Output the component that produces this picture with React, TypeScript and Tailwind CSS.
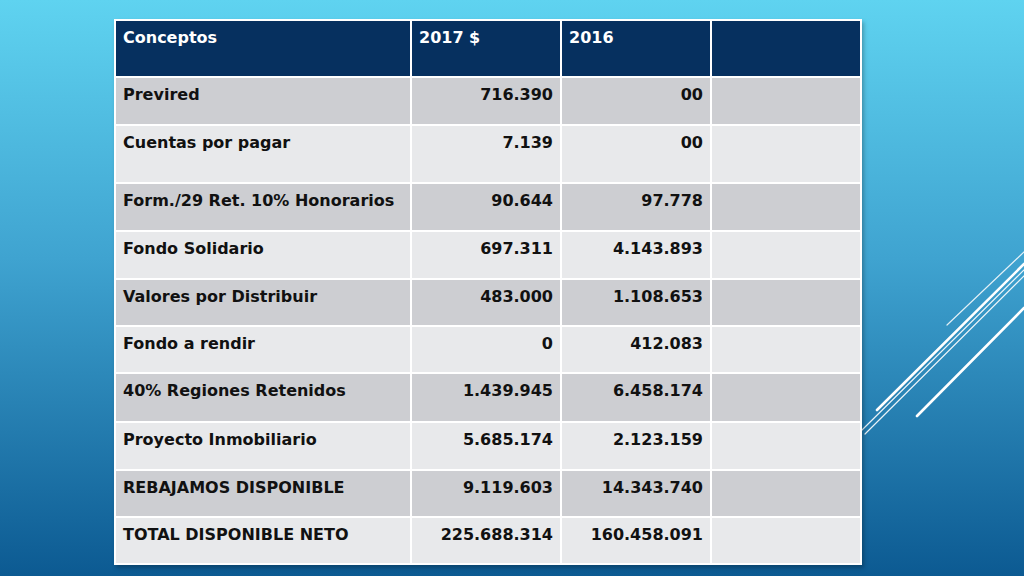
import React from "react";

type Row = { label: string; y2017: string; y2016: string; h: string };

const rows: Row[] = [
  { label: "Previred", y2017: "716.390", y2016: "00", h: "h-[48px]" },
  { label: "Cuentas por pagar", y2017: "7.139", y2016: "00", h: "h-[58px]" },
  { label: "Form./29 Ret. 10% Honorarios", y2017: "90.644", y2016: "97.778", h: "h-[48px]" },
  { label: "Fondo Solidario", y2017: "697.311", y2016: "4.143.893", h: "h-[48px]" },
  { label: "Valores por Distribuir", y2017: "483.000", y2016: "1.108.653", h: "h-[47px]" },
  { label: "Fondo a rendir", y2017: "0", y2016: "412.083", h: "h-[47px]" },
  { label: "40% Regiones Retenidos", y2017: "1.439.945", y2016: "6.458.174", h: "h-[49px]" },
  { label: "Proyecto Inmobiliario", y2017: "5.685.174", y2016: "2.123.159", h: "h-[48px]" },
  { label: "REBAJAMOS DISPONIBLE", y2017: "9.119.603", y2016: "14.343.740", h: "h-[47px]" },
  { label: "TOTAL DISPONIBLE NETO", y2017: "225.688.314", y2016: "160.458.091", h: "h-[47px]" },
];

function Lines() {
  return (
    <svg className="pointer-events-none absolute inset-0" width="1024" height="576" viewBox="0 0 1024 576">
      <g stroke="#ffffff" strokeLinecap="round">
        <line x1="1024" y1="252" x2="947" y2="325" strokeWidth="1.2" opacity="0.85" />
        <line x1="1024" y1="264" x2="877" y2="410" strokeWidth="2.6" />
        <line x1="1024" y1="270" x2="862" y2="430" strokeWidth="1.2" opacity="0.9" />
        <line x1="1024" y1="276" x2="865" y2="434" strokeWidth="1.2" opacity="0.9" />
        <line x1="1024" y1="308" x2="917" y2="416" strokeWidth="2.6" />
      </g>
    </svg>
  );
}

export default function App() {
  return (
    <div className="relative h-[576px] w-[1024px] overflow-hidden bg-[linear-gradient(180deg,#5fd3f0_0%,#3fa3d0_45%,#0c5a92_100%)] pl-[114px] pt-[19px] font-['DejaVu_Sans',sans-serif]">
      <Lines />
      <table className="relative w-[746px] table-fixed border-collapse border border-white text-[16px] font-bold text-[#111] shadow-[2px_3px_4px_rgba(0,0,0,0.25)]">
        <colgroup>
          <col className="w-[296px]" />
          <col className="w-[150px]" />
          <col className="w-[150px]" />
          <col className="w-[150px]" />
        </colgroup>
        <thead>
          <tr className="h-[57px] bg-[#06305f] text-white">
            <th className="border-2 border-white px-[7px] pt-[5px] text-left align-top font-bold">Conceptos</th>
            <th className="border-2 border-white px-[7px] pt-[5px] text-left align-top font-bold">2017 $</th>
            <th className="border-2 border-white px-[7px] pt-[5px] text-left align-top font-bold">2016</th>
            <th className="border-2 border-white" />
          </tr>
        </thead>
        <tbody>
          {rows.map((r, i) => (
            <tr key={r.label} className={`${r.h} ${i % 2 === 0 ? "bg-[#cdced2]" : "bg-[#e8e9eb]"}`}>
              <td className="border-2 border-white px-[7px] pt-[5px] align-top">{r.label}</td>
              <td className="border-2 border-white px-[7px] pt-[5px] text-right align-top">{r.y2017}</td>
              <td className="border-2 border-white px-[7px] pt-[5px] text-right align-top">{r.y2016}</td>
              <td className="border-2 border-white" />
            </tr>
          ))}
        </tbody>
      </table>
    </div>
  );
}
